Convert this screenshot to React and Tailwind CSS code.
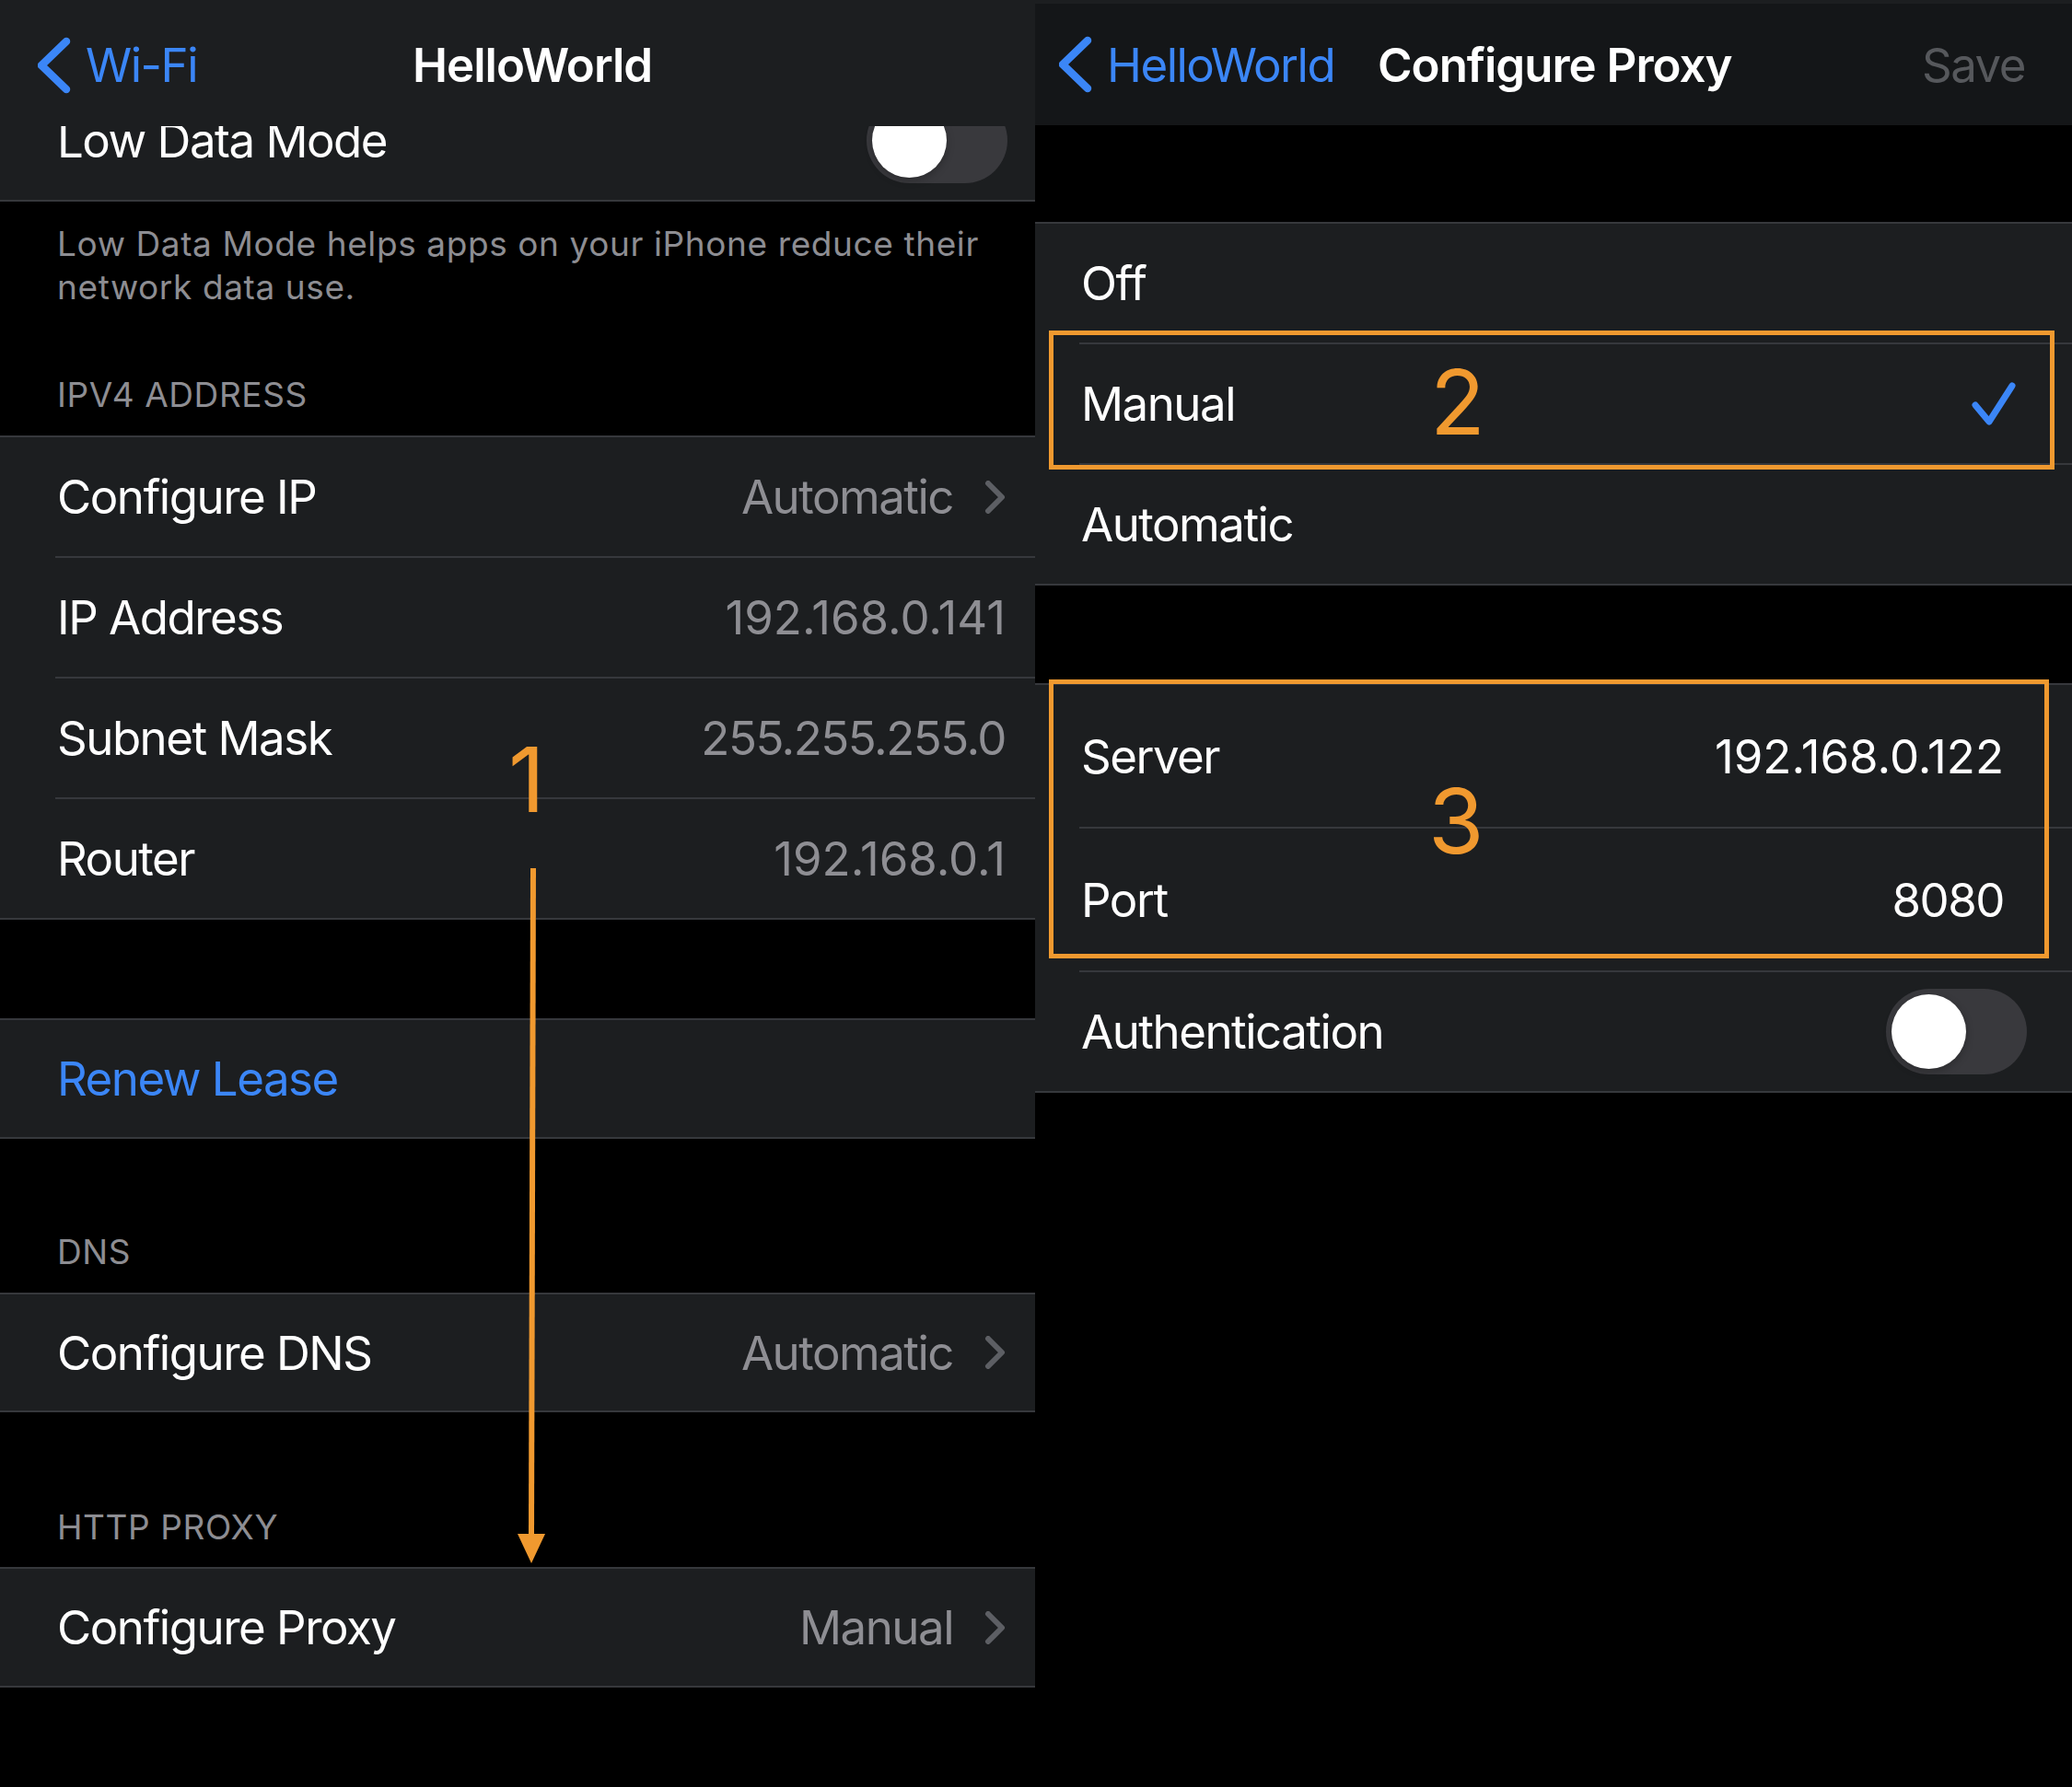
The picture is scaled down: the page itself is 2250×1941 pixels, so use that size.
import React from 'react';

const BLUE = 'text-[#3b86f7]';

function BackChevron() {
  return (
    <svg width="36" height="62" viewBox="0 0 36 62" className="shrink-0">
      <path d="M31 5 L4 31 L31 57" fill="none" stroke="#3b86f7" strokeWidth="8.5" strokeLinecap="round" strokeLinejoin="round" />
    </svg>
  );
}

function Disclosure() {
  return (
    <svg width="24" height="36" viewBox="0 0 24 36" className="ml-[33px] shrink-0">
      <path d="M5 3 L20 18 L5 33" fill="none" stroke="#5d5f64" strokeWidth="6" strokeLinecap="round" strokeLinejoin="round" />
    </svg>
  );
}

function Check() {
  return (
    <svg width="50" height="50" viewBox="0 0 50 50" className="shrink-0">
      <path d="M5 26 L20 44 L45 5" fill="none" stroke="#3b86f7" strokeWidth="7" strokeLinecap="round" strokeLinejoin="round" />
    </svg>
  );
}

function Toggle() {
  return (
    <div className="flex h-[93px] w-[153px] shrink-0 items-center rounded-full bg-[#39393d] p-[6px]">
      <div className="h-[81px] w-[81px] rounded-full bg-white shadow-[0_3px_8px_rgba(0,0,0,0.25)]" />
    </div>
  );
}

function Sep({ inset }) {
  return <div className={`${inset} h-[2px] bg-[#36383c]`} />;
}

function Row({ label, value, chevron, valueClass = 'text-[#8e8e93]', h = 'h-[129px]' }) {
  return (
    <div className={`flex ${h} items-center justify-between pl-[62px] pr-[32px]`}>
      <span className="text-white">{label}</span>
      {value && (
        <div className="flex items-center">
          <span className={valueClass}>{value}</span>
          {chevron && <Disclosure />}
        </div>
      )}
    </div>
  );
}

function Header({ children, pt, pb }) {
  return <div className={`pl-[62px] text-[37px] leading-none tracking-[0.6px] text-[#8d8d92] ${pt} ${pb}`}>{children}</div>;
}

function LeftPanel() {
  // Inter's "1" is narrower than the system font's, so numbers with ones get normal spacing
  const num = 'text-[#8e8e93] tracking-[0px]';
  return (
    <div className="relative w-[1124px] shrink-0 overflow-hidden bg-black">
      <nav className="relative z-10 flex h-[137px] items-center bg-[#1c1e20] pt-[4px]">
        <div className="flex w-[448px] items-center pl-[41px]">
          <BackChevron />
          <span className={`ml-[16px] ${BLUE}`}>Wi-Fi</span>
        </div>
        <span className="font-semibold tracking-[-1px] text-white">HelloWorld</span>
      </nav>

      <div className="-mt-[50px] flex h-[132px] items-center justify-between border-b-2 border-[#36383c] bg-[#1c1e20] pl-[62px] pr-[30px]">
        <span className="text-white">Low Data Mode</span>
        <Toggle />
      </div>

      <p className="whitespace-nowrap pl-[62px] pt-[22px] text-[37px] leading-[47px] tracking-[0.6px] text-[#8d8d92]">
        Low Data Mode helps apps on your iPhone reduce their
        <br />
        network data use.
      </p>

      <Header pt="pt-[75px]" pb="pb-[26px]">IPV4 ADDRESS</Header>
      <div className="border-y-2 border-[#36383c] bg-[#1c1e20]">
        <Row label="Configure IP" value="Automatic" chevron />
        <Sep inset="ml-[60px]" />
        <Row label="IP Address" value="192.168.0.141" valueClass={num} />
        <Sep inset="ml-[60px]" />
        <Row label="Subnet Mask" value="255.255.255.0" />
        <Sep inset="ml-[60px]" />
        <Row label="Router" value="192.168.0.1" valueClass={num} />
      </div>

      <div className="mt-[107px] flex h-[131px] items-center border-y-2 border-[#36383c] bg-[#1c1e20] pl-[62px]">
        <span className={BLUE}>Renew Lease</span>
      </div>

      <Header pt="pt-[104px]" pb="pb-[26px]">DNS</Header>
      <div className="border-y-2 border-[#36383c] bg-[#1c1e20]">
        <Row label="Configure DNS" value="Automatic" chevron h="h-[126px]" />
      </div>

      <Header pt="pt-[106px]" pb="pb-[25px]">HTTP PROXY</Header>
      <div className="border-y-2 border-[#36383c] bg-[#1c1e20]">
        <Row label="Configure Proxy" value="Manual" chevron h="h-[127px]" />
      </div>

      {/* annotation 1 + arrow */}
      <span className="absolute left-[552px] top-[798px] z-20 text-[98px] leading-none tracking-normal text-[#f0992f]">1</span>
      <svg className="pointer-events-none absolute inset-0 z-20" width="1124" height="1941">
        <line x1="579" y1="943" x2="577" y2="1670" stroke="#f0992f" strokeWidth="6" />
        <polygon points="562,1666 592,1666 577,1698" fill="#f0992f" />
      </svg>
    </div>
  );
}

function RRow({ label, right, h = 'h-[129px]', pr = 'pr-[74px]' }) {
  return (
    <div className={`flex ${h} items-center justify-between pl-[50px] ${pr}`}>
      <span className="text-white">{label}</span>
      {right}
    </div>
  );
}

function RightPanel() {
  return (
    <div className="relative flex-1 overflow-hidden bg-black">
      <nav className="flex h-[136px] items-center border-t-4 border-[#1c1e20] bg-[#141618]">
        <div className="flex w-[372px] items-center pl-[26px]">
          <BackChevron />
          <span className={`ml-[16px] ${BLUE}`}>HelloWorld</span>
        </div>
        <span className="font-semibold tracking-[-1px] text-white">Configure Proxy</span>
        <span className="ml-auto pr-[51px] text-[#56585c]">Save</span>
      </nav>

      <div className="mt-[105px] border-y-2 border-[#36383c] bg-[#1c1e20]">
        <RRow label="Off" />
        <Sep inset="ml-[48px]" />
        <RRow label="Manual" right={<Check />} pr="pr-[60px]" />
        <Sep inset="ml-[48px]" />
        <RRow label="Automatic" />
      </div>

      <div className="mt-[106px] border-y-2 border-[#36383c] bg-[#1c1e20]">
        <RRow label="Server" h="h-[154px]" right={<span className="tracking-[0px] text-white">192.168.0.122</span>} />
        <Sep inset="ml-[48px]" />
        <RRow label="Port" h="h-[154px]" right={<span className="text-white">8080</span>} />
        <Sep inset="ml-[48px]" />
        <RRow label="Authentication" pr="pr-[49px]" right={<Toggle />} />
      </div>

      {/* annotations 2 and 3 */}
      <div className="absolute left-[15px] top-[359px] h-[151px] w-[1092px] border-[5px] border-[#f0992f]" />
      <div className="absolute left-[15px] top-[738px] h-[303px] w-[1086px] border-[5px] border-[#f0992f]" />
      <span className="absolute left-[429px] top-[388px] text-[98px] leading-none tracking-normal text-[#f0992f]">2</span>
      <span className="absolute left-[427px] top-[843px] text-[98px] leading-none tracking-normal text-[#f0992f]">3</span>
    </div>
  );
}

export default function App() {
  return (
    <div className="flex h-[1941px] w-[2250px] bg-black font-['Inter','Liberation_Sans',sans-serif] text-[51px] leading-none tracking-[-1.5px]">
      <LeftPanel />
      <RightPanel />
    </div>
  );
}
